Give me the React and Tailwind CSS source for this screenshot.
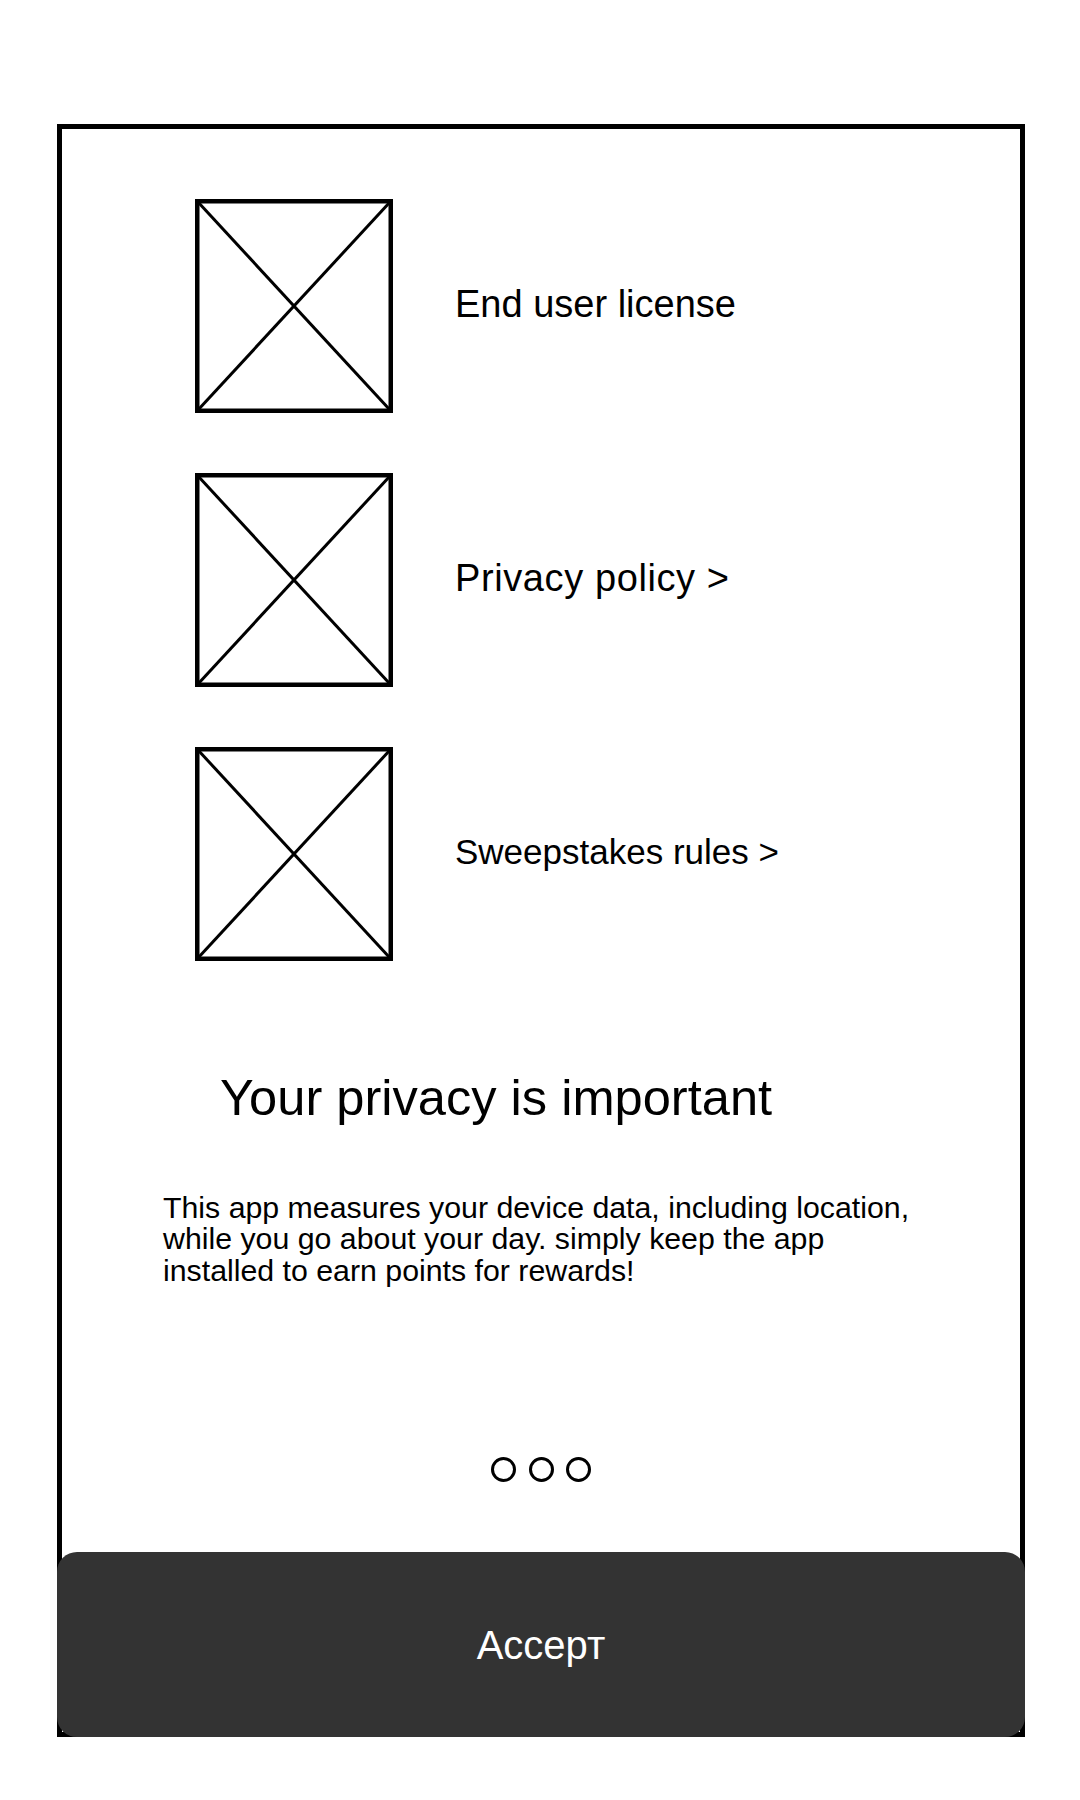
import React from "react";

function Placeholder() {
  return (
    <svg width="198" height="214" viewBox="0 0 198 214" className="block shrink-0">
      <rect x="2.25" y="2.25" width="193.5" height="209.5" fill="white" stroke="black" strokeWidth="4.5" />
      <line x1="3" y1="3" x2="195" y2="211" stroke="black" strokeWidth="3" />
      <line x1="195" y1="3" x2="3" y2="211" stroke="black" strokeWidth="3" />
    </svg>
  );
}

function Row({ label, size }) {
  return (
    <div className="flex items-center h-[214px]">
      <Placeholder />
      <span className={`ml-[62px] mb-[5px] leading-none text-black ${size}`}>{label}</span>
    </div>
  );
}

export default function App() {
  return (
    <div
      className="w-[1080px] h-[1800px] bg-white overflow-hidden"
      style={{ fontFamily: '"Liberation Sans", Arial, sans-serif' }}
    >
      <div className="ml-[57px] mt-[124px] w-[968px] h-[1613px] border-[5px] border-black flex flex-col">
        <div className="pl-[133px] pt-[70px] flex flex-col gap-[60px]">
          <Row label="End user license" size="text-[38px]" />
          <Row label="Privacy policy >" size="text-[38px] tracking-[0.6px]" />
          <Row label="Sweepstakes rules >" size="text-[35px]" />
        </div>
        <h1 className="mt-[112px] pl-[158px] text-[50.6px] leading-none font-normal text-black">
          Your privacy is important
        </h1>
        <p className="mt-[68px] pl-[101px] text-[30.3px] leading-[31.5px] text-black">
          This app measures your device data, including location,
          <br />
          while you go about your day. simply keep the app
          <br />
          installed to earn points for rewards!
        </p>
        <div className="mt-[171px] flex justify-center gap-[12.5px]">
          <span className="w-[25px] h-[25px] rounded-full border-[3px] border-black" />
          <span className="w-[25px] h-[25px] rounded-full border-[3px] border-black" />
          <span className="w-[25px] h-[25px] rounded-full border-[3px] border-black" />
        </div>
        <button className="mt-auto -mx-[5px] -mb-[5px] h-[185px] rounded-[20px] bg-[#333333] flex items-center justify-center text-white text-[40px] leading-none">
          Ассерт
        </button>
      </div>
    </div>
  );
}
